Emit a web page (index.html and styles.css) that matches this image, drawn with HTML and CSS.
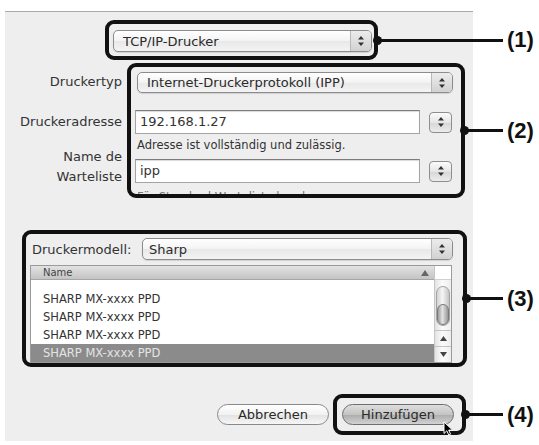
FILE: index.html
```
<!DOCTYPE html>
<html lang="de">
<head>
<meta charset="utf-8">
<title>Drucker hinzufügen</title>
<link rel="stylesheet" href="styles.css">
</head>
<body>
<div class="page">
  <div class="dialog">

    <div class="row row1">
      <div class="callout box1">
        <div class="popup popup-kind">
          <span class="ptext">TCP/IP-Drucker</span>
          <span class="pstep"><svg width="6" height="10" viewBox="0 0 6 10"><path d="M3 0L6 3.6H0Z M0 6.4H6L3 10Z" fill="#333"/></svg></span>
        </div>
      </div>
      <div class="connector"></div>
      <div class="tag">(1)</div>
    </div>

    <div class="row row2">
      <div class="labels">
        <div class="lbl l-typ">Druckertyp</div>
        <div class="lbl l-adr">Druckeradresse</div>
        <div class="lbl l-name">Name de<br>Warteliste</div>
      </div>
      <div class="callout box2">
        <div class="popup popup-typ">
          <span class="ptext">Internet-Druckerprotokoll (IPP)</span>
          <span class="pstep"><svg width="6" height="10" viewBox="0 0 6 10"><path d="M3 0L6 3.6H0Z M0 6.4H6L3 10Z" fill="#333"/></svg></span>
        </div>
        <div class="field-row fr1">
          <div class="field">192.168.1.27</div>
          <div class="step-btn"><svg width="6" height="10" viewBox="0 0 6 10"><path d="M3 0L6 3.6H0Z M0 6.4H6L3 10Z" fill="#333"/></svg></div>
        </div>
        <div class="hint">Adresse ist vollständig und zulässig.</div>
        <div class="field-row fr2">
          <div class="field">ipp</div>
          <div class="step-btn"><svg width="6" height="10" viewBox="0 0 6 10"><path d="M3 0L6 3.6H0Z M0 6.4H6L3 10Z" fill="#333"/></svg></div>
        </div>
        <div class="hint hint-cut">Für Standard-Warteliste leer lassen.</div>
      </div>
      <div class="connector"></div>
      <div class="tag">(2)</div>
    </div>

    <div class="row row3">
      <div class="callout box3">
        <div class="model-row">
          <span class="model-label">Druckermodell:</span>
          <div class="popup popup-model">
            <span class="ptext">Sharp</span>
            <span class="pstep"><svg width="6" height="10" viewBox="0 0 6 10"><path d="M3 0L6 3.6H0Z M0 6.4H6L3 10Z" fill="#333"/></svg></span>
          </div>
        </div>
        <div class="list">
          <div class="list-main">
            <div class="list-head">
              <span>Name</span>
              <svg width="8" height="6" viewBox="0 0 8 6"><path d="M4 0L8 6H0Z" fill="#666"/></svg>
            </div>
            <div class="list-body">
              <div class="item">SHARP MX-xxxx PPD</div>
              <div class="item">SHARP MX-xxxx PPD</div>
              <div class="item">SHARP MX-xxxx PPD</div>
              <div class="item sel">SHARP MX-xxxx PPD</div>
            </div>
          </div>
          <div class="scroll">
            <div class="scroll-corner"></div>
            <div class="scroll-track">
              <div class="thumb"><div class="thumb-core"></div></div>
              <div class="track-fill"></div>
              <div class="arr arr-up"><svg width="7" height="5" viewBox="0 0 7 5"><path d="M3.5 0L7 5H0Z" fill="#444"/></svg></div>
              <div class="arr arr-down"><svg width="7" height="5" viewBox="0 0 7 5"><path d="M0 0H7L3.5 5Z" fill="#444"/></svg></div>
            </div>
          </div>
        </div>
      </div>
      <div class="connector"></div>
      <div class="tag">(3)</div>
    </div>

    <div class="row row4">
      <div class="btn btn-cancel">Abbrechen</div>
      <div class="callout box4">
        <div class="btn btn-default">Hinzufügen
          <svg class="cursor" width="11" height="15" viewBox="0 0 11 15"><path d="M1 1V12.5L3.8 9.8L5.8 14L7.6 13.2L5.7 9.1H9.6Z" fill="#000" stroke="#fff" stroke-width="1" stroke-linejoin="round"/></svg>
        </div>
      </div>
      <div class="connector"></div>
      <div class="tag">(4)</div>
    </div>

  </div>
</div>
</body>
</html>
```

FILE: styles.css
```
* { box-sizing: border-box; }

html, body {
  margin: 0;
  padding: 0;
  background: #ffffff;
}

body {
  font-family: "DejaVu Sans", "Liberation Sans", sans-serif;
  font-size: 13px;
  color: #333333;
}

.page {
  width: 539px;
  height: 445px;
  padding: 11px 0 0 5px;
  overflow: hidden;
}

.dialog {
  width: 468px;
  height: 430px;
  background: #eeeeee;
  border-top: 1px solid #a9a9a9;
}

.row {
  display: flex;
  align-items: center;
  width: 534px;
}

.callout {
  flex: none;
  border: 4px solid #111111;
  border-radius: 9px;
}

.connector {
  flex: 1;
  height: 3px;
  background: #111111;
  position: relative;
  margin-right: 2px;
}

.connector::before {
  content: "";
  position: absolute;
  left: -5px;
  top: -3px;
  width: 9px;
  height: 9px;
  border-radius: 50%;
  background: #111111;
}

.tag {
  flex: none;
  width: 34px;
  padding-left: 2px;
  font-family: "Liberation Sans", Arial, sans-serif;
  font-weight: bold;
  font-size: 22px;
  line-height: 22px;
  color: #111111;
  white-space: nowrap;
}

/* popups */
.popup {
  display: flex;
  border: 1px solid #8c8c8c;
  border-radius: 5px;
  background: linear-gradient(#ffffff, #f3f3f3 50%, #e8e8e8 51%, #f4f4f4);
  overflow: hidden;
  color: #2a2a2a;
  box-shadow: 0 1px 1px rgba(0, 0, 0, 0.12);
}

.ptext {
  flex: 1;
  padding-left: 9px;
  white-space: nowrap;
  display: flex;
  align-items: center;
}

.pstep {
  width: 21px;
  border-left: 1px solid #b8b8b8;
  background: linear-gradient(#ececec, #d2d2d2);
  display: flex;
  align-items: center;
  justify-content: center;
}

/* row 1 */
.row1 {
  margin-top: 8px;
  padding-left: 100px;
}

.box1 {
  width: 273px;
  height: 40px;
  padding: 6px 2px 4px 4px;
}

.popup-kind {
  width: 259px;
  height: 22px;
}

/* row 2 */
.row2 {
  margin-top: 3px;
}

.labels {
  align-self: flex-start;
  flex: none;
  width: 117px;
  margin-right: 5px;
  text-align: right;
  color: #333333;
  white-space: nowrap;
}

.l-typ { margin-top: 11px; line-height: 16px; }
.l-adr { margin-top: 24px; line-height: 16px; }
.l-name { margin-top: 17px; line-height: 20px; }

.box2 {
  width: 338px;
  height: 135px;
  overflow: hidden;
}

.popup-typ {
  width: 316px;
  height: 21px;
  margin: 5px 0 0 6px;
}

.field-row {
  display: flex;
  align-items: center;
  margin-left: 4px;
}

.fr1 { margin-top: 17px; }
.fr2 { margin-top: 7px; }

.field {
  width: 285px;
  height: 24px;
  background: #ffffff;
  border: 1px solid #a4a4a4;
  border-top-color: #7c7c7c;
  box-shadow: inset 0 1px 1px rgba(0, 0, 0, 0.15);
  padding-left: 4px;
  line-height: 22px;
  color: #333333;
}

.step-btn {
  width: 23px;
  height: 21px;
  margin-left: 9px;
  border: 1px solid #8e8e8e;
  border-radius: 4px;
  background: linear-gradient(#fbfbfb, #e6e6e6 50%, #d6d6d6 51%, #ececec);
  display: flex;
  align-items: center;
  justify-content: center;
}

.hint {
  margin-top: 4px;
  padding-left: 6px;
  font-size: 11.5px;
  line-height: 14px;
  white-space: nowrap;
  color: #333333;
}

.hint-cut {
  margin-top: 7px;
  color: #777777;
}

/* row 3 */
.row3 {
  margin-top: 32px;
  padding-left: 17px;
}

.box3 {
  width: 445px;
  height: 137px;
  padding-top: 4px;
}

.model-row {
  display: flex;
  align-items: center;
  height: 22px;
  padding-left: 6px;
}

.model-label {
  width: 110px;
  white-space: nowrap;
}

.popup-model {
  width: 311px;
  height: 22px;
}

.popup-model .ptext { padding-left: 6px; }

.list {
  margin: 5px 0 0 4px;
  width: 422px;
  height: 98px;
  border: 1px solid #9a9a9a;
  background: #ffffff;
  display: flex;
}

.list-main {
  flex: 1;
  display: flex;
  flex-direction: column;
  overflow: hidden;
}

.list-head {
  height: 14px;
  background: linear-gradient(#e2e2e2, #c4c4c4);
  border-bottom: 1px solid #a6a6a6;
  display: flex;
  align-items: center;
  justify-content: space-between;
  padding: 0 5px 0 12px;
  font-size: 10px;
  color: #444444;
}

.list-body {
  padding-top: 10px;
}

.item {
  height: 18px;
  line-height: 18px;
  padding-left: 12px;
  font-size: 11.5px;
  color: #333333;
  white-space: nowrap;
}

.item.sel {
  background: #8b8b8b;
  color: #e4e4e4;
}

.scroll {
  flex: none;
  width: 17px;
  display: flex;
  flex-direction: column;
  border-left: 1px solid #c6c6c6;
}

.scroll-corner {
  height: 14px;
  background: #ffffff;
  border-bottom: 1px solid #d0d0d0;
}

.scroll-track {
  flex: 1;
  display: flex;
  flex-direction: column;
  background: linear-gradient(90deg, #e2e2e2, #fbfbfb 45%, #eeeeee);
}

.thumb {
  margin: 6px 1px 0 1px;
  height: 40px;
  border: 1px solid #a2a2a2;
  border-radius: 7px;
  background: linear-gradient(90deg, #d2d2d2, #f6f6f6 45%, #c4c4c4);
  display: flex;
  flex-direction: column;
  justify-content: flex-end;
}

.thumb-core {
  height: 21px;
  border: 1px solid #7a7a7a;
  border-radius: 6px;
  background: linear-gradient(90deg, #9e9e9e, #e2e2e2 45%, #979797);
}

.track-fill { flex: 1; }

.arr {
  height: 16px;
  display: flex;
  align-items: center;
  justify-content: center;
  border-top: 1px solid #c4c4c4;
}

/* row 4 */
.row4 {
  margin-top: 27px;
  padding-left: 212px;
}

.btn {
  flex: none;
  width: 112px;
  height: 21px;
  border-radius: 11px;
  border: 1px solid #8a8a8a;
  text-align: center;
  line-height: 19px;
  font-size: 13px;
  color: #2a2a2a;
  white-space: nowrap;
}

.btn-cancel {
  margin-right: 4px;
  background: linear-gradient(#ffffff, #f2f2f2 50%, #e2e2e2 51%, #f6f6f6);
}

.box4 {
  width: 133px;
  height: 41px;
  padding: 6px 0 0 5px;
}

.btn-default {
  position: relative;
  border-color: #6e6e6e;
  background: linear-gradient(#dedede, #c4c4c4 50%, #acacac 51%, #d2d2d2);
}

.cursor {
  position: absolute;
  left: 100px;
  top: 16px;
}
```
